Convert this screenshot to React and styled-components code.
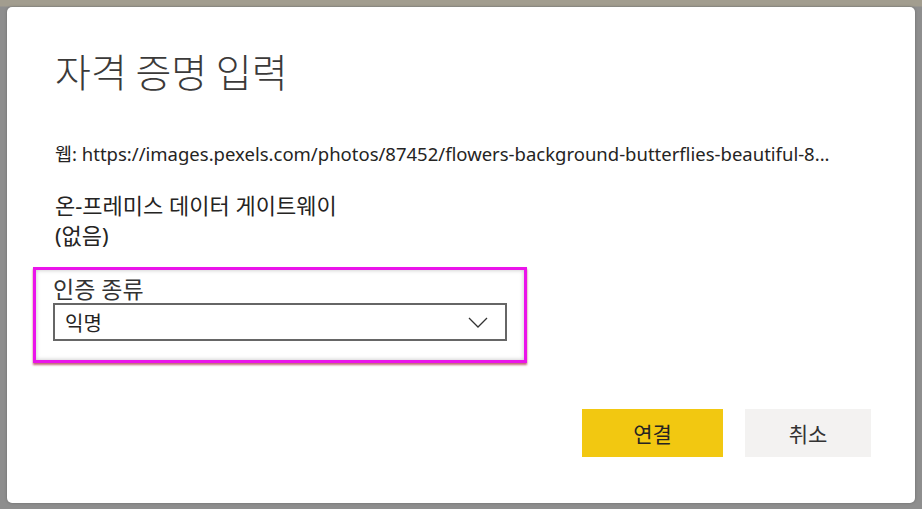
import React from "react"
import styled, { createGlobalStyle } from "styled-components"

const GlobalStyle = createGlobalStyle`
  html, body {
    margin: 0;
    padding: 0;
  }
  body {
    width: 922px;
    height: 509px;
    overflow: hidden;
    font-family: "Noto Sans", "Noto Sans CJK KR", sans-serif;
    background: linear-gradient(to bottom, #a29d8f 0, #a29d8f 6px, #8e8e8e 7px, #8e8e8e 100%);
  }
`

const Backdrop = styled.div`
  box-sizing: border-box;
  width: 922px;
  height: 509px;
  padding: 7px 7px 6px 7px;
  display: flex;
`

const Dialog = styled.div`
  flex: 1;
  background: #fff;
  border-radius: 5px;
  box-shadow: 0 0 3px rgba(0, 0, 0, 0.25);
  padding: 34px 44px 0 48px;
  display: flex;
  flex-direction: column;
  color: #333;
`

const Title = styled.h1`
  margin: 0;
  font-family: "Noto Sans CJK KR", sans-serif;
  font-size: 39px;
  font-weight: 300;
  line-height: 58px;
  color: #3b3a39;
`

const Source = styled.div`
  margin-top: 43px;
  font-size: 18.5px;
  line-height: 24px;
  white-space: nowrap;
  color: #252423;
`

const Gateway = styled.div`
  margin-top: 24px;
  font-size: 22px;
  line-height: 30px;
  color: #252423;
`

const Highlight = styled.div`
  margin: 17px 0 0 -22px;
  width: 494px;
  box-sizing: border-box;
  border: 3px solid #ea14ea;
  box-shadow: 0 2px 2px rgba(150, 0, 30, 0.6), inset 0 0 4px rgba(0, 0, 0, 0.25);
  padding: 5px 17px 19px 17px;
`

const FieldLabel = styled.div`
  font-size: 23px;
  line-height: 28px;
  color: #333;
`

const Select = styled.div`
  height: 38px;
  box-sizing: border-box;
  border: 2px solid #666;
  display: flex;
  align-items: center;
  justify-content: space-between;
  padding: 0 17px 0 10px;
  font-size: 20px;
  color: #252423;
`

const Footer = styled.div`
  margin-top: auto;
  margin-bottom: 46px;
  display: flex;
  justify-content: flex-end;
  gap: 22px;
`

const Button = styled.button`
  border: none;
  height: 48px;
  width: ${(p) => p.$w}px;
  background: ${(p) => (p.$primary ? "#f2c811" : "#f3f2f1")};
  color: ${(p) => (p.$primary ? "#252423" : "#333")};
  font-family: "Noto Sans CJK KR", sans-serif;
  font-size: 21px;
  cursor: pointer;
`

function Chevron() {
  return (
    <svg width="20" height="11" viewBox="0 0 20 11">
      <polyline points="1,1 10,10 19,1" fill="none" stroke="#333" strokeWidth="1.3" />
    </svg>
  )
}

export default function App() {
  return (
    <Backdrop>
      <GlobalStyle />
      <Dialog>
        <Title>자격 증명 입력</Title>
        <Source>웹: https://images.pexels.com/photos/87452/flowers-background-butterflies-beautiful-8...</Source>
        <Gateway>
          온-프레미스 데이터 게이트웨이
          <br />
          (없음)
        </Gateway>
        <Highlight>
          <FieldLabel>인증 종류</FieldLabel>
          <Select>
            <span>익명</span>
            <Chevron />
          </Select>
        </Highlight>
        <Footer>
          <Button $primary $w={141}>연결</Button>
          <Button $w={126}>취소</Button>
        </Footer>
      </Dialog>
    </Backdrop>
  )
}
